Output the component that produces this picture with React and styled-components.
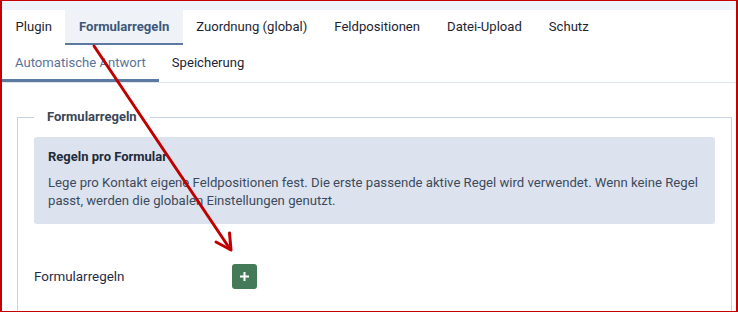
import React from 'react'
import styled, { createGlobalStyle } from 'styled-components'

const GlobalStyle = createGlobalStyle`
  html, body {
    margin: 0;
    padding: 0;
    background: #fff;
  }
  body {
    font-family: Roboto, 'Liberation Sans', Arial, sans-serif;
    font-size: 13px;
    color: #1c2330;
  }
`

const Frame = styled.div`
  position: relative;
  width: 738px;
  height: 312px;
  box-sizing: border-box;
  border: 1px solid #c40000;
  border-left-width: 2px;
  border-right-width: 2px;
  overflow: hidden;
  background: #fff;
`

const TopStrip = styled.div`
  height: 9px;
  background: #eef2fa;
`

const TabBar = styled.nav`
  display: flex;
  height: 35px;
`

const Tab = styled.div`
  display: flex;
  align-items: center;
  padding: 0 13.5px;
  box-sizing: border-box;
  border-bottom: 2px solid ${(p) => (p.$active ? '#5c79a0' : 'transparent')};
  background: ${(p) => (p.$active ? '#eff3f8' : 'transparent')};
  color: ${(p) => (p.$active ? '#3d5878' : '#1c2330')};
  font-weight: ${(p) => (p.$active ? 700 : 400)};
  font-size: 13.1px;
  white-space: nowrap;
`

const SubTabBar = styled.nav`
  display: flex;
  height: 38px;
  border-bottom: 1px solid #dfe5ee;
  box-sizing: border-box;
`

const SubTab = styled.div`
  display: flex;
  align-items: center;
  padding: 0 13px;
  box-sizing: border-box;
  border-bottom: 3px solid ${(p) => (p.$active ? '#5c79a0' : 'transparent')};
  color: ${(p) => (p.$active ? '#5a7399' : '#1c2330')};
  font-size: 13.1px;
  white-space: nowrap;
`

const Content = styled.div`
  padding: 26px 4px 0 15px;
`

const Fieldset = styled.fieldset`
  margin: 0;
  padding: 0 16px 40px;
  border: 1px solid #c6d2e0;
  min-width: 0;
`

const Legend = styled.legend`
  padding: 0 13px;
  font-weight: 700;
  font-size: 13px;
  line-height: 16px;
  color: #3b4657;
`

const Alert = styled.div`
  margin-top: 12px;
  padding: 11px 14px 14px;
  background: #dce3ee;
  border-radius: 3px;
  line-height: 18px;
`

const AlertTitle = styled.div`
  font-weight: 700;
  color: #1f2b3b;
  margin-bottom: 8px;
`

const AlertText = styled.div`
  color: #3c4a5d;
  font-size: 13.15px;
`

const FormRow = styled.div`
  display: flex;
  align-items: center;
  margin-top: 40px;
`

const Label = styled.label`
  width: 198px;
  color: #1f2d4a;
  font-size: 13.4px;
`

const AddButton = styled.button`
  width: 25px;
  height: 25px;
  padding: 0;
  border: 0;
  border-radius: 3px;
  background: #447a57;
  display: flex;
  align-items: center;
  justify-content: center;
  cursor: pointer;
`

const Annotation = styled.svg`
  position: absolute;
  left: -2px;
  top: -1px;
  pointer-events: none;
`

export default function App() {
  const tabs = ['Plugin', 'Formularregeln', 'Zuordnung (global)', 'Feldpositionen', 'Datei-Upload', 'Schutz']
  const subTabs = ['Automatische Antwort', 'Speicherung']
  return (
    <>
      <GlobalStyle />
      <Frame>
        <TopStrip />
        <TabBar>
          {tabs.map((t) => (
            <Tab key={t} $active={t === 'Formularregeln'}>{t}</Tab>
          ))}
        </TabBar>
        <SubTabBar>
          {subTabs.map((t, i) => (
            <SubTab key={t} $active={i === 0}>{t}</SubTab>
          ))}
        </SubTabBar>
        <Content>
          <Fieldset>
            <Legend>Formularregeln</Legend>
            <Alert>
              <AlertTitle>Regeln pro Formular</AlertTitle>
              <AlertText>
                Lege pro Kontakt eigene Feldpositionen fest. Die erste passende aktive Regel wird verwendet. Wenn keine Regel passt, werden die globalen Einstellungen genutzt.
              </AlertText>
            </Alert>
            <FormRow>
              <Label>Formularregeln</Label>
              <AddButton aria-label='Hinzufügen'>
                <svg width='11' height='11' viewBox='0 0 11 11'>
                  <path d='M5.5 1v9M1 5.5h9' stroke='#fff' strokeWidth='2' />
                </svg>
              </AddButton>
            </FormRow>
          </Fieldset>
        </Content>
        <Annotation width='738' height='312' viewBox='0 0 738 312'>
          <g stroke='#c00000' strokeWidth='3' fill='none' strokeLinecap='round' strokeLinejoin='round'>
            <path d='M94 46L230 249' />
            <path d='M216 242L231 250L229.5 233' />
          </g>
        </Annotation>
      </Frame>
    </>
  )
}
